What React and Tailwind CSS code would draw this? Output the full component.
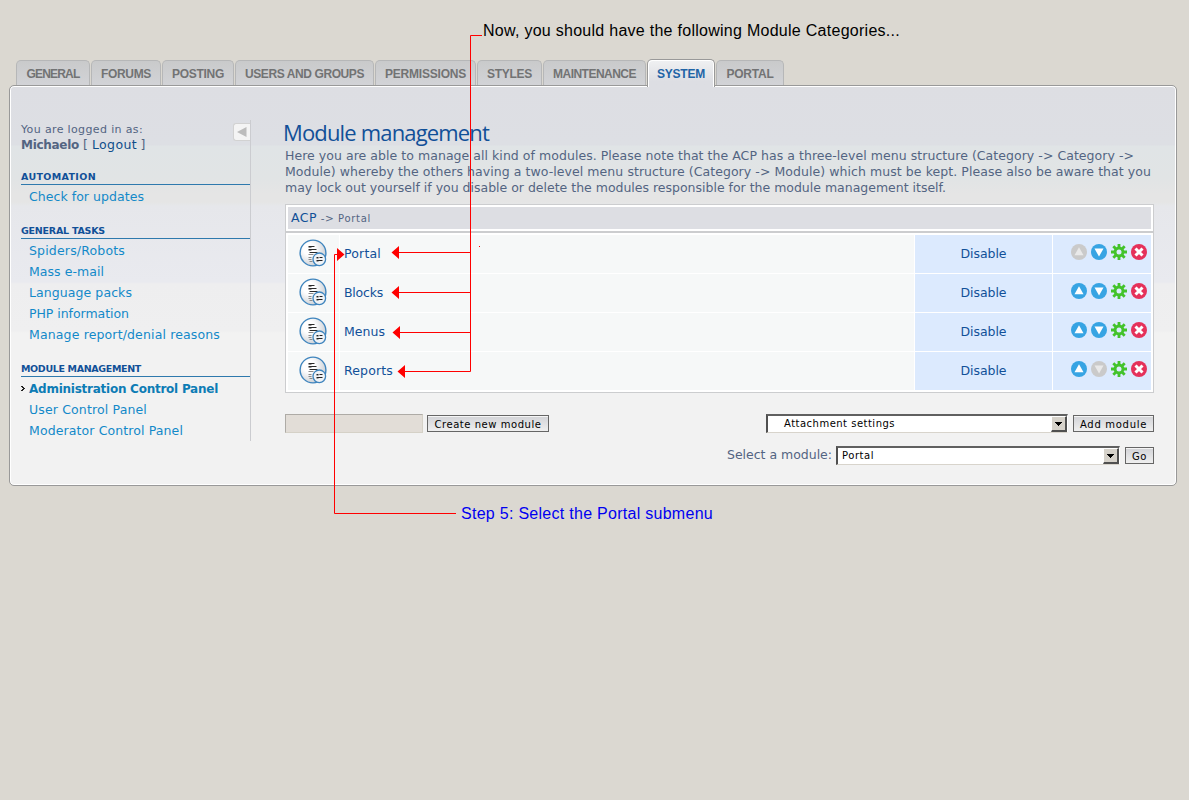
import { useLayoutEffect, useRef, useState } from 'react';

// Spreads a single line of text evenly over a given width.
function Fit({ w, className = '', children }) {
  const ref = useRef(null);
  const [spacing, setSpacing] = useState(0);
  useLayoutEffect(() => {
    const natural = ref.current.getBoundingClientRect().width;
    const count = ref.current.textContent.length;
    setSpacing((w - natural) / count);
  }, [w]);
  return (
    <span ref={ref} className={`inline-block whitespace-pre ${className}`} style={{ letterSpacing: `${spacing}px` }}>
      {children}
    </span>
  );
}

const tabs = [
  { label: 'GENERAL', text: 53, size: 'w-[74px]' },
  { label: 'FORUMS', text: 50, size: 'w-[70px]' },
  { label: 'POSTING', text: 52, size: 'w-[72px]' },
  { label: 'USERS AND GROUPS', text: 119, size: 'w-[139px]' },
  { label: 'PERMISSIONS', text: 81, size: 'w-[101px]' },
  { label: 'STYLES', text: 45, size: 'w-[65px]' },
  { label: 'MAINTENANCE', text: 83, size: 'w-[103px]' },
  { label: 'SYSTEM', text: 48, size: 'w-[68px]', active: true },
  { label: 'PORTAL', text: 47, size: 'w-[68px]' },
];

const menu = [
  { title: 'AUTOMATION', w: 75, items: [['Check for updates', 115]] },
  {
    title: 'GENERAL TASKS',
    w: 84,
    items: [
      ['Spiders/Robots', 96],
      ['Mass e-mail', 75],
      ['Language packs', 103],
      ['PHP information', 100],
      ['Manage report/denial reasons', 191],
    ],
  },
  {
    title: 'MODULE MANAGEMENT',
    w: 120,
    items: [
      ['Administration Control Panel', 189, true],
      ['User Control Panel', 118],
      ['Moderator Control Panel', 154],
    ],
  },
];

const rows = [
  { name: 'Portal', w: 37, up: false, down: true },
  { name: 'Blocks', w: 39, up: true, down: true },
  { name: 'Menus', w: 41, up: true, down: true },
  { name: 'Reports', w: 49, up: true, down: false },
];

function ModuleIcon() {
  return (
    <svg width="28" height="28" viewBox="0 0 28 28">
      <defs>
        <radialGradient id="disc" cx="0.35" cy="0.35" r="0.75">
          <stop offset="0.3" stopColor="#ffffff" />
          <stop offset="1" stopColor="#c4c9cf" />
        </radialGradient>
      </defs>
      <circle cx="14" cy="14" r="12.9" fill="url(#disc)" stroke="#3f85be" strokeWidth="1.4" />
      <path d="M9.500 7.500h6M9.500 10.500h8M10.500 13.500h8" stroke="#2a2a2a" strokeWidth="1.1" />
      <path d="M9.500 8.500h3M9.500 11.500h3M9.500 15.500h5M9.500 18.500h3M9.500 20.500h3M10.500 22.500h3" stroke="#8a8a8a" strokeWidth="1" />
      <circle cx="20.300" cy="20.300" r="6.300" fill="#f0f3f6" stroke="#3f85be" strokeWidth="1.3" />
      <path d="M17.500 18.500h2M20.500 18.500h3M17.500 21.500h6" stroke="#222" strokeWidth="1.2" />
      <path d="M17.500 19.500h2M17.500 22.500h2" stroke="#999" strokeWidth="1" />
    </svg>
  );
}

function Arrow({ down, on }) {
  return (
    <svg width="16" height="16" viewBox="0 0 16 16">
      <circle cx="8" cy="8" r="8" fill={on ? '#37a4e3' : '#cacaca'} />
      <path d={down ? 'M3.500 4.500h9L8 12.500z' : 'M3.500 11.300h9L8 3.300z'} fill={on ? '#fff' : '#e9e9e9'} />
    </svg>
  );
}

function Gear() {
  return (
    <svg width="16" height="16" viewBox="0 0 16 16">
      <g stroke="#43c32b" strokeWidth="2.800">
        <path d="M8 0v16M0 8h16M2.300 2.300l11.400 11.400M13.700 2.300L2.300 13.700" />
      </g>
      <circle cx="8" cy="8" r="5.400" fill="#43c32b" />
      <circle cx="8" cy="8" r="2.500" fill="#dceafe" />
    </svg>
  );
}

function Remove() {
  return (
    <svg width="16" height="16" viewBox="0 0 16 16">
      <circle cx="8" cy="8" r="8" fill="#e5315a" />
      <path d="M4.500 4.500l7 7M11.500 4.500l-7 7" stroke="#fff" strokeWidth="3" />
    </svg>
  );
}

function Select({ label, w, className, pad }) {
  return (
    <div className={`flex h-[19px] items-stretch border-t-2 border-l-2 border-r border-b border-t-[#606060] border-l-[#505050] border-r-white border-b-[#d8d4cc] bg-white ${className}`}>
      <div className={`flex grow items-center text-[10px] leading-none text-black ${pad}`}>
        <Fit w={w}>{label}</Fit>
      </div>
      <div className="flex w-4 items-center justify-center border-t border-l border-r-2 border-b-2 border-t-white border-l-white border-r-[#505050] border-b-[#505050] bg-[#d6d2ca]">
        <svg width="7" height="4" viewBox="0 0 7 4" shapeRendering="crispEdges">
          <path d="M0 0h7L3.500 4z" fill="#000" />
        </svg>
      </div>
    </div>
  );
}

function Button({ label, w, className }) {
  return (
    <button className={`flex h-[17px] items-center justify-center border border-[#666] bg-linear-to-b from-[#d2d3d7] to-[#efefef] pt-[2px] text-[10px] leading-none text-black shadow-[inset_0_1px_0_#f5f5f5] ${className}`}>
      <Fit w={w}>{label}</Fit>
    </button>
  );
}

function Annotations() {
  return (
    <>
      <svg className="pointer-events-none absolute top-0 left-0" width="1189" height="800" viewBox="0 0 1189 800">
        <g fill="none" stroke="#f00" strokeWidth="1">
          <path d="M482 35.500H470.500V371.500H405M470.500 252.500H399M470.500 292.500H399M470.500 332.500H400" />
          <path d="M337 254.500H334.500V513.500H456" />
        </g>
        <g fill="#f00">
          <path d="M391.500 252.500l7.500-6.500v13zM391.500 292.500l7.500-6.500v13zM392.500 332.500l7.500-6.500v13zM397.500 371.500l7.500-6.500v13zM344.500 254.500l-7.500-6.500v13z" />
          <path d="M479 246h1v1h-1z" />
        </g>
      </svg>
      <div className="absolute top-[21px] left-[483px] font-['Liberation_Sans'] text-[16px] leading-5 text-black">
        <Fit w={417}>Now, you should have the following Module Categories...</Fit>
      </div>
      <div className="absolute top-[504px] left-[461px] font-['Liberation_Sans'] text-[16px] leading-5 text-[#0000f0]">
        <Fit w={252}>Step 5: Select the Portal submenu</Fit>
      </div>
    </>
  );
}

export default function App() {
  return (
    <div className="relative h-[800px] w-[1189px] overflow-hidden bg-[#dbd8d1] pt-[59px] pl-[9px] font-['DejaVu_Sans',sans-serif]">
      <nav className="flex h-[26px] items-end gap-px pl-[7px]">
        {tabs.map((t) => (
          <div
            key={t.label}
            className={
              t.active
                ? `z-10 -mb-[2px] flex h-[28px] items-center justify-center rounded-t-[5px] border border-b-0 border-[#999] bg-linear-to-b from-[#f0f1f2] to-[#dddee3] to-80% pt-px font-['Liberation_Sans'] text-[12px] leading-none font-bold text-[#1f64a6] shadow-[inset_1px_1px_0_#fff,inset_-1px_0_0_#fff] ${t.size}`
                : `flex h-[25px] items-center justify-center rounded-t-[5px] border border-b-0 border-[#b6b7b8] bg-linear-to-b from-[#c9cacb] to-[#d2d3d7] pt-[2px] font-['Liberation_Sans'] text-[12px] leading-none font-bold text-[#727374] ${t.size}`
            }
          >
            <Fit w={t.text}>{t.label}</Fit>
          </div>
        ))}
      </nav>

      <div className="flex h-[401px] w-[1168px] rounded-[5px] border border-[#999] bg-[linear-gradient(to_bottom,#dddee3_0px,#dddfe4_59px,#e0e4e6_60px,#e1e4e5_92px,#e5e5e5_108px,#e5e5e5_116px,#e6e7eb_120px,#e9eaef_196px,#eeeeef_198px,#efeff0_245px,#f2f2f2_247px)] shadow-[inset_0_0_0_1px_#fff]">
        <aside className="mt-[34px] ml-[11px] h-[321px] w-[230px] border-r border-[#cbccd0]">
          <div className="flex h-[39px] justify-between">
            <div className="pt-[2px] text-[#536482]">
              <div className="h-[15px] text-[11px] leading-4">
                <Fit w={122}>You are logged in as:</Fit>
              </div>
              <div className="flex h-4 text-[12.500px] leading-4">
                <Fit w={58} className="text-[12px] font-bold">Michaelo</Fit>
                <Fit w={13}>{' [ '}</Fit>
                <Fit w={45} className="text-[#0f4d8a]">Logout</Fit>
                <Fit w={8}>{' ]'}</Fit>
              </div>
            </div>
            <div className="mt-[3px] flex h-[18px] w-[17px] items-center justify-center rounded-l-[3px] border border-r-0 border-[#d2d2d2] bg-[#f4f4f4]">
              <svg width="10" height="10" viewBox="0 0 10 10">
                <path d="M0 5L9.500 0v10z" fill="#bcbcbc" />
              </svg>
            </div>
          </div>
          {menu.map((m) => (
            <section key={m.title} className="pb-[6px]">
              <h5 className="flex h-[26px] items-end border-b border-[#2e79ad] pb-[2px] text-[9.500px] leading-[11px] font-bold text-[#115098]">
                <Fit w={m.w}>{m.title}</Fit>
              </h5>
              <ul className="pt-px">
                {m.items.map(([label, w, active]) => (
                  <li key={label} className={`flex h-[21px] items-center leading-none ${active ? 'text-[12px] font-bold text-[#0d7cb5]' : 'pt-[2px] text-[12.500px] text-[#1389c9]'}`}>
                    <span className="flex w-2 items-center">
                      {active && (
                        <svg width="4" height="5" viewBox="0 0 4 5" shapeRendering="crispEdges">
                          <path d="M0 0h2v1h1v1h1v1H3v1H2v1H0V4h1V3h1V2H1V1H0z" fill="#222" />
                        </svg>
                      )}
                    </span>
                    <Fit w={w}>{label}</Fit>
                  </li>
                ))}
              </ul>
            </section>
          ))}
        </aside>

        <main className="mt-[33px] ml-[34px] w-[869px]">
          <h1 className="-ml-[2px] h-[29px] font-['Open_Sans'] text-[22px] leading-[27px] text-[#115098]">
            <Fit w={206}>Module management</Fit>
          </h1>
          <div className="h-[56px] text-[12.500px] leading-4 text-[#536482]">
            <div className="h-4"><Fit w={849}>{'Here you are able to manage all kind of modules. Please note that the ACP has a three-level menu structure (Category -> Category ->'}</Fit></div>
            <div className="h-4"><Fit w={866}>{'Module) whereby the others having a two-level menu structure (Category -> Module) which must be kept. Please also be aware that you'}</Fit></div>
            <div className="h-4"><Fit w={661}>may lock out yourself if you disable or delete the modules responsible for the module management itself.</Fit></div>
          </div>

          <div className="border border-[#cccdcf] bg-white">
            <div className="border-b-2 border-[#cccdcf] p-[2px]">
              <div className="flex h-[22px] items-center bg-[#dddee3] pl-[3px] leading-none text-[#536482]">
                <Fit w={26} className="text-[12.500px] text-[#115098]">ACP</Fit>
                <Fit w={21} className="pt-px text-[10.500px]">{' -> '}</Fit>
                <Fit w={33} className="pt-px text-[10px]">Portal</Fit>
              </div>
            </div>
            <div className="flex flex-col gap-px p-[2px] text-[12.500px] leading-none text-[#115098]">
              {rows.map((r) => (
                <div key={r.name} className="flex h-[38px] gap-px">
                  <div className="flex w-[51px] items-center justify-center bg-[#f6f8f8] pr-px pb-[2px]"><ModuleIcon /></div>
                  <div className="flex w-[574px] items-center bg-[#f6f8f8] pl-1"><Fit w={r.w}>{r.name}</Fit></div>
                  <div className="flex w-[137px] items-center justify-center bg-[#dceafe]"><Fit w={46}>Disable</Fit></div>
                  <div className="flex grow items-center justify-end gap-1 bg-[#dceafe] pr-1 pb-[5px]">
                    <Arrow on={r.up} />
                    <Arrow down on={r.down} />
                    <Gear />
                    <Remove />
                  </div>
                </div>
              ))}
            </div>
          </div>

          <div className="mt-[21px] flex h-[19px] items-center">
            <div className="h-[19px] w-[138px] border border-t-[#aeaba6] border-r-[#d5d1c7] border-b-[#d5d1c7] border-l-[#aeaba6] bg-[#e2ddd7]" />
            <Button label="Create new module" w={107} className="ml-1 w-[122px]" />
            <Select label="Attachment settings" w={111} pad="pl-4" className="ml-auto w-[302px]" />
            <Button label="Add module" w={67} className="ml-[5px] w-[81px]" />
          </div>
          <div className="mt-[13px] flex h-[19px] items-center justify-end">
            <Fit w={105} className="mr-1 text-[12.500px] leading-none text-[#536482]">Select a module:</Fit>
            <Select label="Portal" w={32} pad="pl-1" className="w-[284px]" />
            <Button label="Go" w={15} className="ml-[5px] w-[29px]" />
          </div>
        </main>
      </div>

      <Annotations />
    </div>
  );
}
